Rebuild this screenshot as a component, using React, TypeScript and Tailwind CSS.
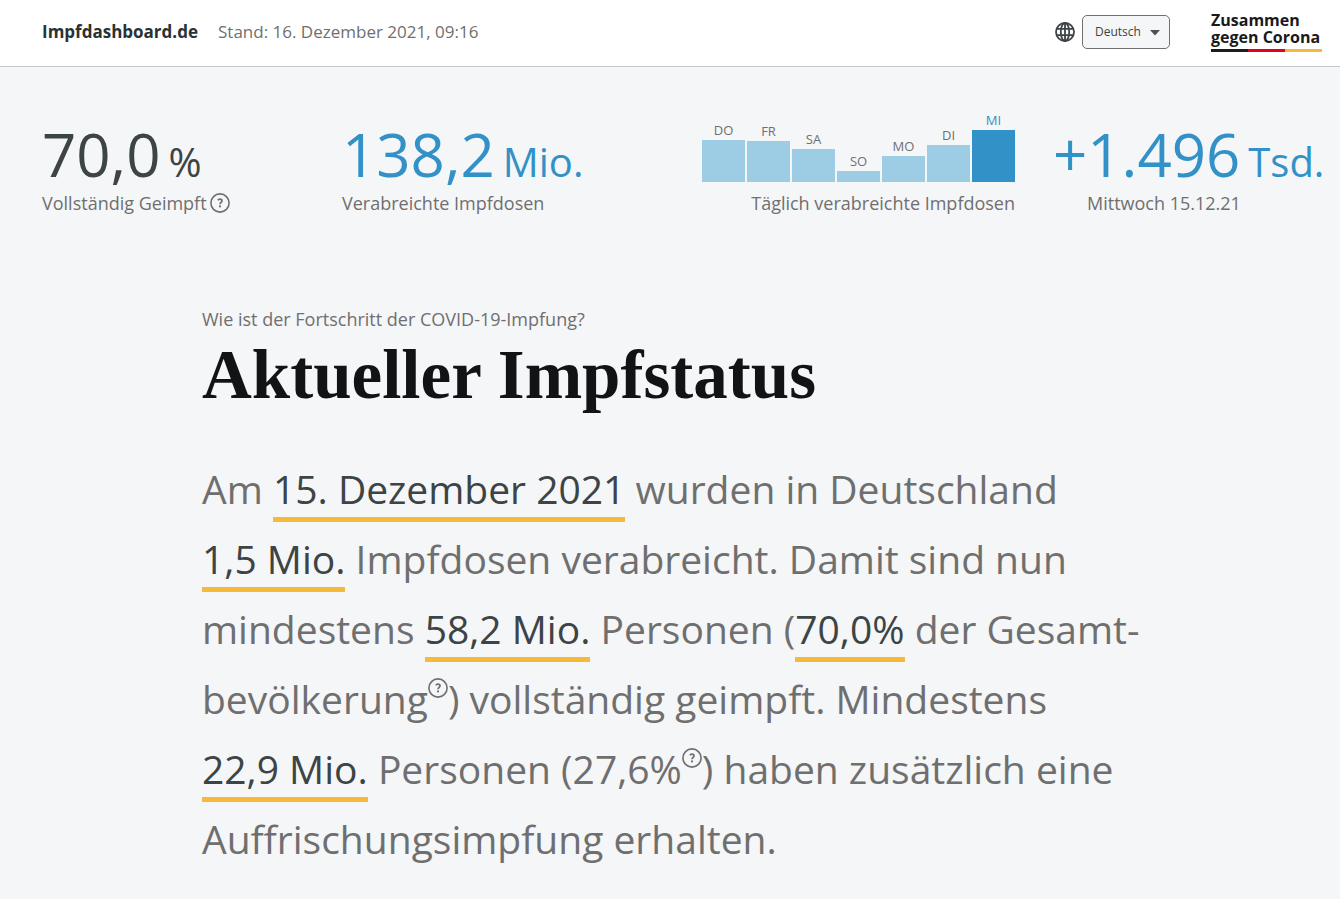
import React from 'react';

interface DailyDoses {
    day: string;
    height: number;
}

const dailyDoses: DailyDoses[] = [
    { day: 'DO', height: 42 },
    { day: 'FR', height: 41 },
    { day: 'SA', height: 33 },
    { day: 'SO', height: 11 },
    { day: 'MO', height: 26 },
    { day: 'DI', height: 37 },
    { day: 'MI', height: 52 },
];

function GlobeIcon() {
    return (
        <svg width="20" height="20" viewBox="0 0 20 20" fill="none" stroke="#3c4445" strokeWidth="1.8" aria-hidden="true">
            <circle cx="10" cy="10" r="9" />
            <ellipse cx="10" cy="10" rx="4.2" ry="9" />
            <path d="M10 1v18M2 6.8h16M2 13.2h16" />
        </svg>
    );
}

function HelpIcon() {
    return (
        <svg width="20" height="20" viewBox="0 0 20 20" fill="none" stroke="#6f6f6f" aria-hidden="true">
            <circle cx="10" cy="10" r="9.1" strokeWidth="1.6" />
            <path d="M7.8 7.3c.5-.8 1.2-1.1 2.1-1.1 1.3 0 2.1.7 2.1 1.7 0 1.4-2 1.5-2 3.3" strokeWidth="1.7" />
            <circle cx="10" cy="13.4" r="1.1" fill="#6f6f6f" stroke="none" />
        </svg>
    );
}

function HelpButton({ label }: { label: string }) {
    return (
        <button type="button" aria-label={label} className="inline-flex h-5 w-5 cursor-pointer align-[16px]">
            <HelpIcon />
        </button>
    );
}

function Highlight({ children }: { children: React.ReactNode }) {
    return <strong className="border-b-5 border-[#f7b939] pb-[2px] font-normal text-[#3c4445]">{children}</strong>;
}

function Header() {
    return (
        <header className="flex h-[67px] items-center border-b border-[#c8c8c8] bg-white pr-[18px] pb-[2px] pl-[42px]">
            <a href="#" className="text-[17px] font-bold text-[#2b3233]">Impfdashboard.de</a>
            <p className="ml-[20px] text-[17px] text-[#6f6f6f]">Stand: 16. Dezember 2021, 09:16</p>

            <div className="ml-auto flex items-center gap-[7px]">
                <GlobeIcon />
                <div className="relative">
                    <select
                        aria-label="Sprache"
                        className="h-[34px] w-[88px] appearance-none rounded-[5px] border border-[#6f6f6f] bg-[#f5f6f8] pl-3 text-[12px] text-[#3c4445]"
                    >
                        <option>Deutsch</option>
                        <option>English</option>
                    </select>
                    <svg className="pointer-events-none absolute top-[15px] right-[10px]" width="10" height="6" viewBox="0 0 10 6" aria-hidden="true">
                        <path d="M0 0h10L5 5.5z" fill="#4a5152" />
                    </svg>
                </div>
            </div>

            {/* Campaign logo */}
            <a href="#" className="ml-[41px] w-[111px] text-[16px] leading-[17px] font-bold whitespace-nowrap text-[#1a1a1a]">
                <span className="block">Zusammen</span>
                <span className="block">gegen Corona</span>
                <span className="mt-[3px] flex h-[3px]">
                    <span className="flex-1 bg-[#1c1c1c]" />
                    <span className="flex-1 bg-[#e2001a]" />
                    <span className="flex-1 bg-[#f7b939]" />
                </span>
            </a>
        </header>
    );
}

function BigNumber({ value, unit }: { value: string; unit: string }) {
    return (
        <p className="flex items-baseline gap-2 text-[60px] leading-[56px] font-medium whitespace-nowrap">
            <span>{value}</span>
            <span className="text-[40px]">{unit}</span>
        </p>
    );
}

function DosesChart() {
    return (
        <div className="flex h-[72px] items-end gap-[2px]">
            {dailyDoses.map(({ day, height }) => {
                const current = day === 'MI';
                return (
                    <div key={day} className="w-[43px] text-center">
                        <p className={current ? 'text-[13px] leading-5 text-[#3291c6]' : 'text-[13px] leading-5 text-[#6f6f6f]'}>
                            {day}
                        </p>
                        <div className={current ? 'bg-[#3291c6]' : 'bg-[#9dcde4]'} style={{ height }} />
                    </div>
                );
            })}
        </div>
    );
}

function Stats() {
    return (
        <section className="flex items-end pt-[43px] pr-[18px] pl-[42px] text-[18px] leading-[26px] text-[#6f6f6f]">
            <div className="w-[300px]">
                <div className="text-[#3c4445]">
                    <BigNumber value="70,0" unit="%" />
                </div>
                <p className="flex items-center gap-[3px]">
                    Vollständig Geimpft <HelpButton label="Info zu Vollständig Geimpft" />
                </p>
            </div>
            <div>
                <div className="text-[#3291c6]">
                    <BigNumber value="138,2" unit="Mio." />
                </div>
                <p>Verabreichte Impfdosen</p>
            </div>
            <div className="ml-auto">
                <DosesChart />
                <p className="mt-2 text-right">Täglich verabreichte Impfdosen</p>
            </div>
            <div className="ml-[38px] w-[269px]">
                <div className="text-[#3291c6]">
                    <BigNumber value="+1.496" unit="Tsd." />
                </div>
                <p className="pl-[34px]">Mittwoch 15.12.21</p>
            </div>
        </section>
    );
}

export default function App() {
    return (
        <div className="min-h-screen bg-[#f5f6f8] font-['Open_Sans',sans-serif]">
            <Header />
            <main>
                <Stats />
                <section className="px-[202px] pt-[90px] pb-6 whitespace-nowrap text-[#6f6f6f]">
                    <p className="text-[18px] leading-[26px]">Wie ist der Fortschritt der COVID-19-Impfung?</p>
                    <h1 className="font-['Liberation_Serif',serif] text-[69px] leading-[86px] font-bold text-[#111315]">
                        Aktueller Impfstatus
                    </h1>
                    <p className="mt-[36px] text-[39px] leading-[70px]">
                        Am <Highlight>15. Dezember 2021</Highlight> wurden in Deutschland
                        <br />
                        <Highlight>1,5 Mio.</Highlight> Impfdosen verabreicht. Damit sind nun
                        <br />
                        mindestens <Highlight>58,2 Mio.</Highlight> Personen (<Highlight>70,0%</Highlight> der Gesamt-
                        <br />
                        bevölkerung
                        <HelpButton label="Info zur Gesamtbevölkerung" />) vollständig geimpft. Mindestens
                        <br />
                        <Highlight>22,9 Mio.</Highlight> Personen (27,6%
                        <HelpButton label="Info zur Auffrischungsimpfung" />) haben zusätzlich eine
                        <br />
                        Auffrischungsimpfung erhalten.
                    </p>
                </section>
            </main>
        </div>
    );
}
